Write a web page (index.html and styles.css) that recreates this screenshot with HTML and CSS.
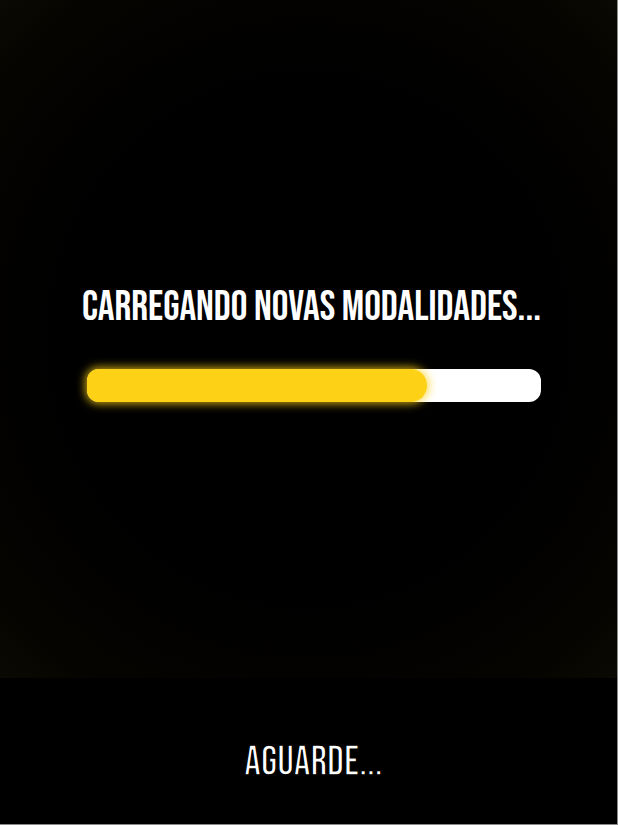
FILE: index.html
```html
<!DOCTYPE html>
<html lang="pt-BR">
<head>
<meta charset="utf-8">
<title>Carregando</title>
<link rel="stylesheet" href="styles.css">
</head>
<body>
<div class="screen">
  <main class="stage">
    <h1 class="title">Carregando novas modalidades...</h1>
    <div class="track">
      <div class="fill" style="width: 75.1%"></div>
    </div>
  </main>
  <footer class="footer">
    <p class="wait">Aguarde...</p>
  </footer>
</div>
</body>
</html>
```
FILE: styles.css
```css
html, body {
  margin: 0;
  padding: 0;
  background: #000;
}
.screen {
  width: 617px;
  height: 824px;
  border-right: 1px solid #8a8a8a;
  border-bottom: 1px solid #8a8a8a;
  display: flex;
  flex-direction: column;
  font-family: "Bebas Neue", "Oswald", sans-serif;
  color: #fff;
}
.stage {
  height: 678px;
  flex: none;
  display: flex;
  flex-direction: column;
  align-items: center;
  padding-top: 287px;
  box-sizing: border-box;
  background: radial-gradient(ellipse 75% 70% at 50% 50%, #000 55%, #050400 85%, #0b0a03 100%);
}
.title {
  margin: 0 0 40px 0;
  font-size: 41.6px;
  line-height: 42px;
  font-weight: 400;
  text-transform: uppercase;
  white-space: nowrap;
  letter-spacing: 0;
  transform: translateX(3px);
}
.track {
  width: 454px;
  height: 33px;
  margin-left: 10px;
  background: #fff;
  border-radius: 12px;
  position: relative;
}
.fill {
  height: 100%;
  background: #fdd116;
  border-radius: 12px 17px 17px 12px;
  box-shadow: 0 0 9px 2px rgba(253, 209, 22, 0.75);
}
.footer {
  flex: 1;
  background: #000;
  display: flex;
  justify-content: center;
  padding-top: 63px;
  box-sizing: border-box;
}
.wait {
  margin: 0;
  font-size: 41.5px;
  line-height: 43px;
  font-weight: 400;
  text-transform: uppercase;
  -webkit-text-stroke: 1.4px #000;
  transform: translateX(5px);
}
```
